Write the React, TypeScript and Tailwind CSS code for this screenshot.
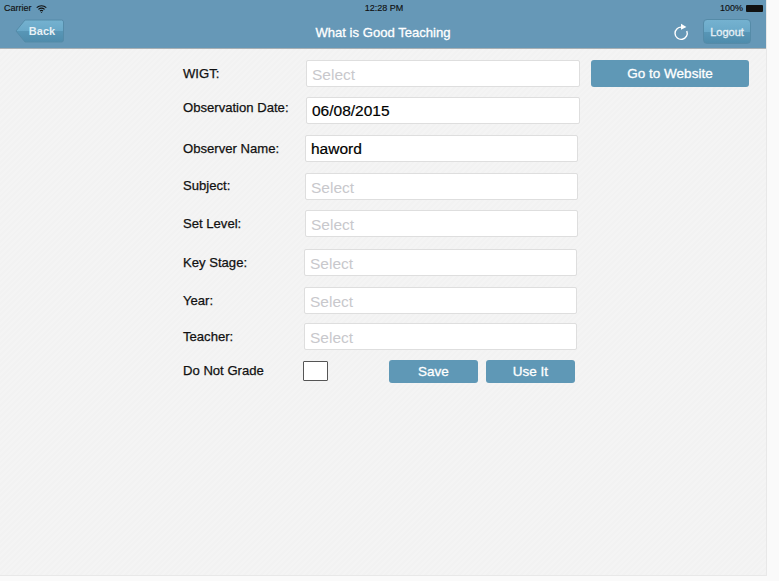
import React from 'react';

const rows = [
  { label: 'WIGT:', value: '', rowCls: '', labelCls: 'w-[123px] pt-[6px]', fieldCls: 'w-[274px]' },
  { label: 'Observation Date:', value: '06/08/2015', rowCls: 'mt-[10px]', labelCls: 'w-[123px] pt-[3px]', fieldCls: 'w-[274px]' },
  { label: 'Observer Name:', value: 'haword', rowCls: 'mt-[11px]', labelCls: 'w-[122px] pt-[6px]', fieldCls: 'w-[273px]' },
  { label: 'Subject:', value: '', rowCls: 'mt-[11px]', labelCls: 'w-[122px] pt-[5px]', fieldCls: 'w-[273px]' },
  { label: 'Set Level:', value: '', rowCls: 'mt-[10px]', labelCls: 'w-[122px] pt-[6px]', fieldCls: 'w-[273px]' },
  { label: 'Key Stage:', value: '', rowCls: 'mt-[12px]', labelCls: 'w-[121px] pt-[6px]', fieldCls: 'w-[273px]' },
  { label: 'Year:', value: '', rowCls: 'mt-[11px]', labelCls: 'w-[121px] pt-[6px]', fieldCls: 'w-[273px]' },
  { label: 'Teacher:', value: '', rowCls: 'mt-[9px]', labelCls: 'w-[121px] pt-[6px]', fieldCls: 'w-[273px]' },
];

function Field({ value, className }: { value: string; className: string }) {
  return (
    <div className={`h-[27px] bg-white border border-[#dedede] rounded-[2px] flex items-center pl-[5px] ${className}`}>
      {value ? (
        <span className="text-[15.5px] pt-[1px] text-black [-webkit-text-stroke:0.2px_black]">{value}</span>
      ) : (
        <span className="text-[15.5px] pt-[3px] text-[#c8c8cc]">Select</span>
      )}
    </div>
  );
}

function ActionButton({ children, className }: { children: React.ReactNode; className: string }) {
  return (
    <button className={`bg-[#5f98b6] rounded-[3px] pt-[2px] text-white text-[13.5px] [-webkit-text-stroke:0.3px_white] flex items-center justify-center ${className}`}>
      {children}
    </button>
  );
}

export default function App() {
  return (
    <div className="w-[779px] h-[581px] bg-[#fafafa] overflow-hidden font-['Liberation_Sans',sans-serif]">
      <div className="w-[767px] h-[576px] border-b border-r border-[#e8e8e8] bg-[repeating-linear-gradient(135deg,#f4f4f4_0px,#f4f4f4_2px,#f2f2f2_2px,#f2f2f2_4px)]">
        {/* Header */}
        <div className="h-[49px] bg-[#6698b7] border-b border-[#a9b0b4]">
          <div className="h-[16px] pt-[1px] flex items-center justify-between pl-[4px] pr-[2px] text-[9px] text-[#111] [-webkit-text-stroke:0.15px_#111]">
            <div className="w-[120px] flex items-center gap-[4px]">
              <span>Carrier</span>
              <svg width="11" height="8" viewBox="0 0 11 8" fill="none" stroke="#111" strokeWidth="1.2">
                <path d="M0.7 2.6C3.5 0.2 7.5 0.2 10.3 2.6" />
                <path d="M2.4 4.4C4.2 3 6.8 3 8.6 4.4" />
                <path d="M4 6C4.9 5.3 6.1 5.3 7 6" />
                <path d="M5.5 7.9L4.6 6.9H6.4Z" fill="#111" stroke="none" />
              </svg>
            </div>
            <span>12:28 PM</span>
            <div className="w-[120px] flex items-center justify-end gap-[3px]">
              <span>100%</span>
              <div className="w-[17px] h-[7px] bg-[#111] rounded-[1px] mr-[1px]" />
            </div>
          </div>
          <div className="h-[32px] grid grid-cols-[1fr_auto_1fr] items-start">
            <div className="pl-[15px] pt-[3px]">
              <div className="relative w-[49px] h-[24px] flex items-center justify-center pl-[5px]">
                <svg className="absolute inset-0" width="49" height="24" viewBox="0 0 49 24">
                  <defs>
                    <linearGradient id="navBack" x1="0" y1="0" x2="0" y2="1">
                      <stop offset="0" stopColor="#75b2d0" />
                      <stop offset="0.5" stopColor="#69a8c8" />
                      <stop offset="0.52" stopColor="#5896b6" />
                      <stop offset="1" stopColor="#4f8cac" />
                    </linearGradient>
                  </defs>
                  <path d="M1 12L10 1H46.5Q48.5 1 48.5 3V21Q48.5 23 46.5 23H10Z" fill="url(#navBack)" stroke="#558ba8" />
                </svg>
                <span className="relative text-[11px] font-bold text-[#e8f1f6]">Back</span>
              </div>
            </div>
            <div className="text-white text-[13.1px] [-webkit-text-stroke:0.3px_white] pt-[7px]">What is Good Teaching</div>
            <div className="flex justify-end items-start pr-[15px] pt-[3px] gap-[14px]">
              <svg className="mt-[4px]" width="16" height="18" viewBox="0 0 16 18" fill="none" stroke="white" strokeWidth="1.4">
                <path d="M9 4.2A6.1 6.1 0 1 0 13.8 8" />
                <path d="M8 0.8L13.4 4L8 6.8Z" fill="white" stroke="none" />
              </svg>
              <div className="w-[48px] h-[25px] pt-[2px] rounded-[4px] border border-[#558ba8] bg-[linear-gradient(180deg,#75b2d0_0%,#69a8c8_50%,#5896b6_52%,#4f8cac_100%)] flex items-center justify-center text-[11px] text-[#e8f1f6] [-webkit-text-stroke:0.3px_#e8f1f6]">
                Logout
              </div>
            </div>
          </div>
        </div>

        {/* Form */}
        <div className="pt-[11px] pl-[183px]">
          {rows.map((r, i) => (
            <div key={r.label} className={`flex items-start ${r.rowCls}`}>
              <span className={`text-[13.1px] leading-[15px] text-[#111] [-webkit-text-stroke:0.25px_#111] ${r.labelCls}`}>{r.label}</span>
              <Field value={r.value} className={r.fieldCls} />
              {i === 0 && <ActionButton className="w-[158px] h-[27px] ml-[11px]">Go to Website</ActionButton>}
            </div>
          ))}
          <div className="flex items-start mt-[10px]">
            <span className="w-[120px] pt-[3px] text-[13.1px] leading-[15px] text-[#111] [-webkit-text-stroke:0.25px_#111]">Do Not Grade</span>
            <div className="w-[25px] h-[20px] mt-[1px] bg-white border border-[#555] rounded-[1px]" />
            <ActionButton className="w-[89px] h-[23px] ml-[61px]">Save</ActionButton>
            <ActionButton className="w-[89px] h-[23px] ml-[8px]">Use It</ActionButton>
          </div>
        </div>
      </div>
    </div>
  );
}
